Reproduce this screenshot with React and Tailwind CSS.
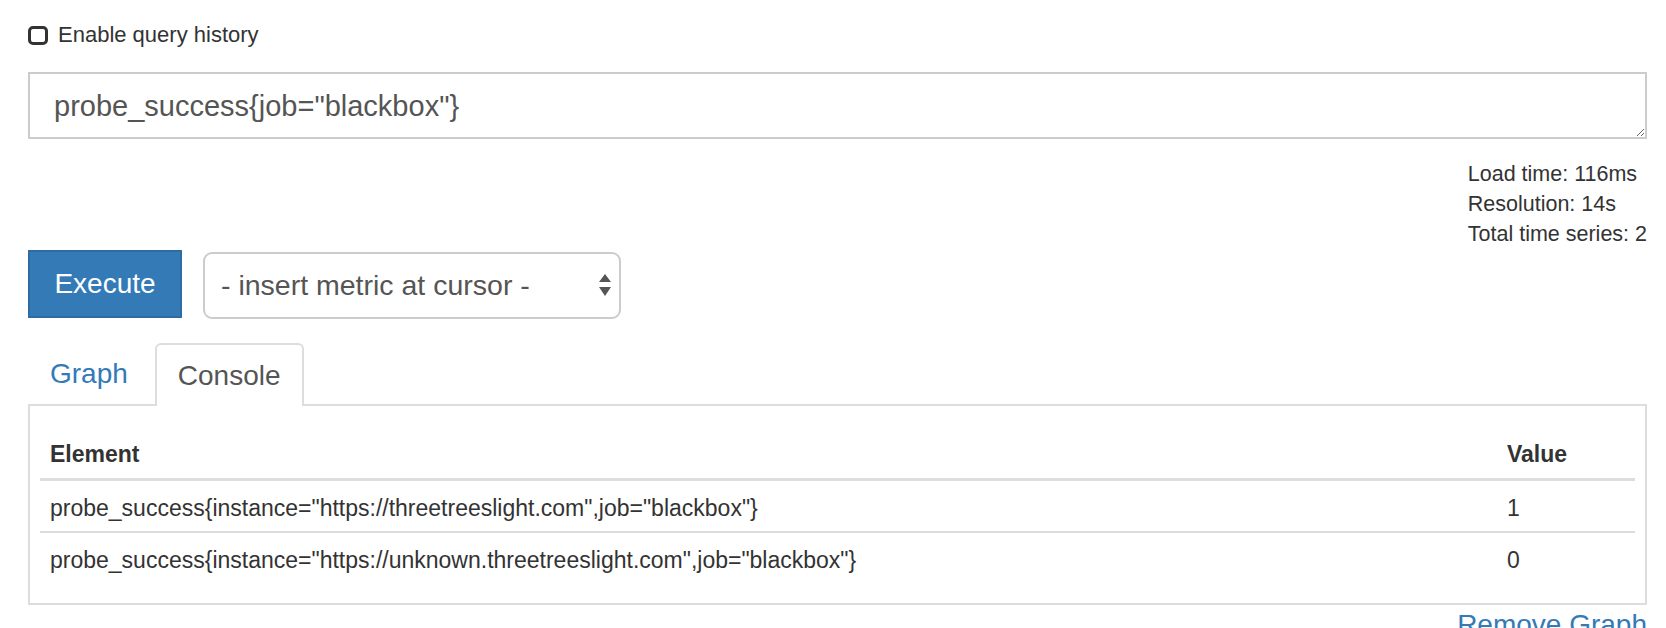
import React from 'react';

const font = "font-['Liberation_Sans',Arial,sans-serif]";

const rows = [
  { element: 'probe_success{instance="https://threetreeslight.com",job="blackbox"}', value: '1' },
  { element: 'probe_success{instance="https://unknown.threetreeslight.com",job="blackbox"}', value: '0' },
];

const App = () => {
  return (
    <div className={`${font} min-h-screen bg-white text-[#333] pl-[28px] pr-[19px] pt-[20px]`}>
      {/* query history toggle */}
      <label className="flex items-center h-[30px]">
        <span className="w-[20px] h-[19px] border-[3px] border-[#333] rounded-[5px] mr-[10px]" />
        <span className="text-[22px] leading-[30px]">Enable query history</span>
      </label>

      {/* expression input */}
      <textarea
        className="mt-[22px] block w-full h-[67px] border-2 border-[#ccc] pl-[24px] pt-[12px] text-[29px] leading-[40px] text-[#555] outline-none"
        defaultValue={'probe_success{job="blackbox"}'}
        readOnly
      />

      {/* stats */}
      <div className="flex justify-end mt-[20px]">
        <div className="text-[21.5px] leading-[30px]">
          <div>Load time: 116ms</div>
          <div>Resolution: 14s</div>
          <div>Total time series: 2</div>
        </div>
      </div>

      {/* actions */}
      <div className="flex items-start gap-[21px] mt-[1px]">
        <button className="h-[68px] w-[154px] bg-[#337ab7] border-2 border-[#2e6da4] text-white text-[28px]">
          Execute
        </button>
        <div className="mt-[2px] h-[67px] w-[418px] border-2 border-[#ccc] rounded-[9px] flex items-center justify-between pl-[16px] pr-[8px] text-[28.5px] text-[#555]">
          <span>- insert metric at cursor -</span>
          <svg width="12" height="23" viewBox="0 0 12 23">
            <polygon points="6,0 12,8 0,8" fill="#555" />
            <polygon points="0,13 12,13 6,22" fill="#555" />
          </svg>
        </div>
      </div>

      {/* tabs */}
      <div className="mt-[24px] flex items-end border-b-2 border-[#ddd] text-[28px]">
        <div className="h-[61px] flex items-center px-[22px] mr-[5px] text-[#337ab7]">Graph</div>
        <div className="h-[63px] -mb-[2px] flex items-center px-[21px] border-2 border-b-0 border-[#ddd] rounded-t-[6px] bg-white text-[#555]">
          Console
        </div>
      </div>

      {/* console panel */}
      <div className="border-2 border-t-0 border-[#ddd] px-[10px] pt-[21px] pb-[20px]">
        <table className="w-full text-[23px] leading-[30px] border-collapse">
          <thead>
            <tr className="border-b-[3px] border-[#ddd]">
              <th className="text-left font-bold pl-[10px] pt-[12px] pb-[9px]">Element</th>
              <th className="text-left font-bold pl-[11px] pt-[12px] pb-[9px] w-[139px]">Value</th>
            </tr>
          </thead>
          <tbody>
            {rows.map((r, i) => (
              <tr key={i} className={i > 0 ? 'border-t-2 border-[#ddd]' : ''}>
                <td className="pl-[10px] pt-[12px] pb-[8px]">{r.element}</td>
                <td className="pl-[11px] pt-[12px] pb-[8px]">{r.value}</td>
              </tr>
            ))}
          </tbody>
        </table>
      </div>

      <div className="flex justify-end">
        <span className="text-[28px] leading-[40px] text-[#337ab7]">Remove Graph</span>
      </div>
    </div>
  );
};

export default App;
